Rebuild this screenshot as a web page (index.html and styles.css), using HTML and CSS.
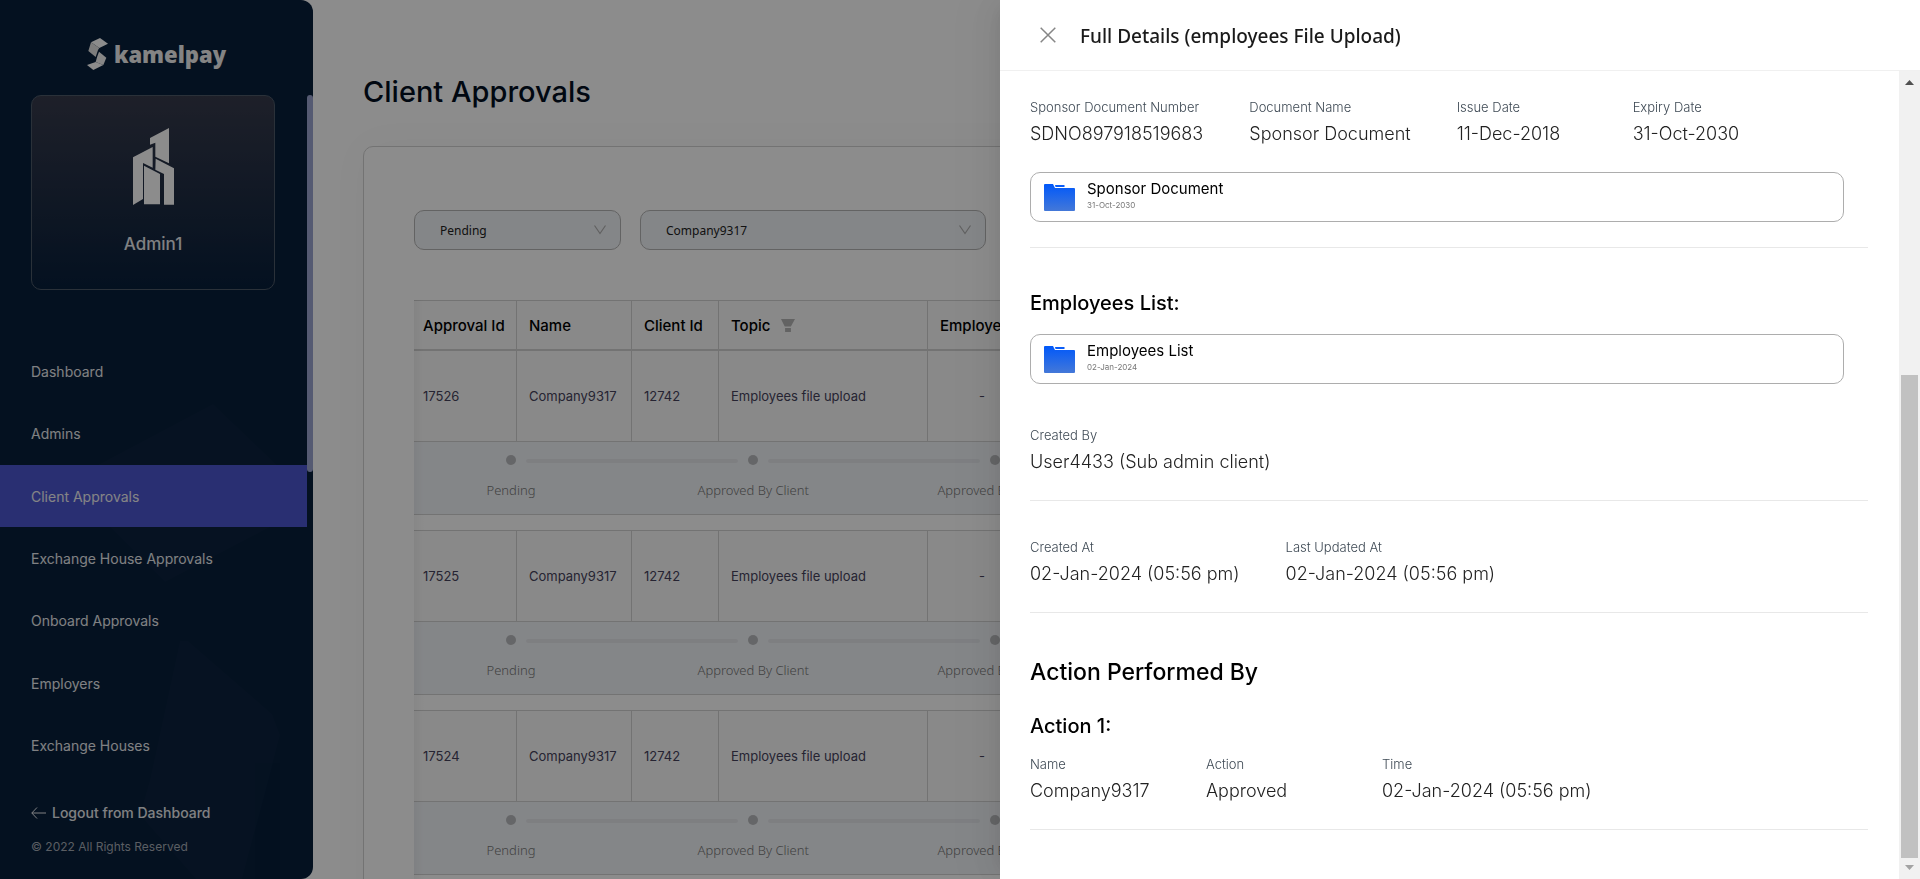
FILE: index.html
```html
<!DOCTYPE html>
<html lang="en">
<head>
<meta charset="utf-8">
<title>Client Approvals</title>
<link rel="stylesheet" href="styles.css">
</head>
<body>
<div class="app">
  <aside class="sidebar">
    <svg class="sidebar-art" viewBox="0 0 313 879" aria-hidden="true">
      <polygon points="98,465 213,404 280,468 270,527 165,582 110,527"/>
      <polygon points="180,641 188,641 272,714 280,735 242,879 196,879 140,815 150,780"/>
    </svg>
    <div class="brand">
      <svg class="brand-mark" viewBox="264 114 63 96" aria-hidden="true">
        <polygon fill="#fff" points="276,127 303,114 327,131 301,144"/>
        <polygon fill="#e4e4e4" points="276,127 301,144 297,150 290,171 268,153"/>
        <polygon fill="#f4f4f4" points="300,155 322,173 313,195 290,186 294,172"/>
        <polygon fill="#fff" points="290,186 313,195 283,210 264,195"/>
      </svg>
      <span class="brand-name">kamelpay</span>
    </div>
    <div class="sidebar-scroll">
      <div class="sidebar-content">
        <div class="profile">
          <svg class="profile-icon" viewBox="399 384 123 231" aria-hidden="true">
            <path d="M450 414 507 384V490L466 470V428L450 434ZM399 472 458 441V503L429 489V597L399 615ZM432 497 480 522V613H432ZM467 476 522 505V614H492V522L466 509Z"/>
          </svg>
          <span class="profile-name">Admin1</span>
        </div>
        <nav class="nav">
          <a href="#">Dashboard</a>
          <a href="#">Admins</a>
          <a href="#" class="active">Client Approvals</a>
          <a href="#">Exchange House Approvals</a>
          <a href="#">Onboard Approvals</a>
          <a href="#">Employers</a>
          <a href="#">Exchange Houses</a>
        </nav>
      </div>
      <div class="sidebar-track"><div class="sidebar-thumb"></div></div>
    </div>
    <div class="sidebar-footer">
      <a href="#" class="logout">
        <svg viewBox="0 0 15 12" aria-hidden="true"><path d="M6 .5.8 6 6 11.5M.8 6H15"/></svg>
        Logout from Dashboard
      </a>
      <p class="copyright">© 2022 All Rights Reserved</p>
    </div>
  </aside>

  <main class="main">
    <h1 class="page-title">Client Approvals</h1>
    <section class="panel">
      <div class="filters">
        <div class="select select-status">
          <select aria-label="Status"><option>Pending</option></select>
          <svg viewBox="0 0 12 10" aria-hidden="true"><path d="M.5.5 6 8.5 11.500.5"/></svg>
        </div>
        <div class="select select-company">
          <select aria-label="Company"><option>Company9317</option></select>
          <svg viewBox="0 0 12 10" aria-hidden="true"><path d="M.5.5 6 8.5 11.500.5"/></svg>
        </div>
      </div>
      <div class="table-wrap">
        <table class="approvals">
          <colgroup><col class="c-id"><col class="c-name"><col class="c-client"><col class="c-topic"><col class="c-emp"><col></colgroup>
          <thead>
            <tr>
              <th>Approval Id</th><th>Name</th><th>Client Id</th>
              <th>Topic <svg class="funnel" viewBox="306 415 41 38" aria-hidden="true"><path d="M306 415H347L335 437H317ZM318 441H335V453H318Z"/></svg></th>
              <th>Employees</th><th></th>
            </tr>
          </thead>
          <tbody>
            <tr class="row"><td>17526</td><td>Company9317</td><td>12742</td><td>Employees file upload</td><td class="center">-</td><td></td></tr>
            <tr class="progress"><td colspan="6">
              <ol class="steps"><li><i></i><span>Pending</span></li><li><i></i><span>Approved By Client</span></li><li><i></i><span>Approved By Admin</span></li><li><i></i></li><li><i></i></li><li><i></i></li></ol>
            </td></tr>
            <tr class="spacer"><td colspan="6"></td></tr>
            <tr class="row"><td>17525</td><td>Company9317</td><td>12742</td><td>Employees file upload</td><td class="center">-</td><td></td></tr>
            <tr class="progress"><td colspan="6">
              <ol class="steps"><li><i></i><span>Pending</span></li><li><i></i><span>Approved By Client</span></li><li><i></i><span>Approved By Admin</span></li><li><i></i></li><li><i></i></li><li><i></i></li></ol>
            </td></tr>
            <tr class="spacer"><td colspan="6"></td></tr>
            <tr class="row"><td>17524</td><td>Company9317</td><td>12742</td><td>Employees file upload</td><td class="center">-</td><td></td></tr>
            <tr class="progress"><td colspan="6">
              <ol class="steps"><li><i></i><span>Pending</span></li><li><i></i><span>Approved By Client</span></li><li><i></i><span>Approved By Admin</span></li><li><i></i></li><li><i></i></li><li><i></i></li></ol>
            </td></tr>
            <tr class="spacer"><td colspan="6"></td></tr>
          </tbody>
        </table>
      </div>
    </section>
  </main>
</div>

<div class="mask"></div>

<section class="drawer" role="dialog" aria-labelledby="drawer-title">
  <header class="drawer-header">
    <button class="close" type="button" aria-label="Close">
      <svg viewBox="0 0 16 16" aria-hidden="true"><path d="M.7.7 15.300 15.300M15.300.7.7 15.300"/></svg>
    </button>
    <h2 id="drawer-title" class="drawer-title">Full Details (employees File Upload)</h2>
  </header>
  <div class="drawer-main">
    <div class="drawer-body">
      <dl class="fields">
        <div><dt>Sponsor Document Number</dt><dd>SDNO897918519683</dd></div>
        <div><dt>Document Name</dt><dd>Sponsor Document</dd></div>
        <div><dt>Issue Date</dt><dd>11-Dec-2018</dd></div>
        <div><dt>Expiry Date</dt><dd>31-Oct-2030</dd></div>
      </dl>
      <a href="#" class="file file-after-fields">
        <svg class="folder" viewBox="0 0 31 27" aria-hidden="true">
          <defs><linearGradient id="folder-fill" x1="0" y1="0" x2="0" y2="1"><stop offset="0" stop-color="#0058fa"/><stop offset="1" stop-color="#4478d8"/></linearGradient></defs>
          <path fill="url(#folder-fill)" d="M1 0H9L11 4H30Q31 4 31 5V26Q31 27 30 27H1Q0 27 0 26V1Q0 0 1 0Z"/>
          <path fill="#0a5df8" d="M11 1H20.500V3H11.500Z"/>
        </svg>
        <span class="file-text"><span class="file-name">Sponsor Document</span><span class="file-date">31-Oct-2030</span></span>
      </a>
      <hr class="rule">
      <h3 class="heading heading-list">Employees List:</h3>
      <a href="#" class="file">
        <svg class="folder" viewBox="0 0 31 27" aria-hidden="true">
          <path fill="url(#folder-fill)" d="M1 0H9L11 4H30Q31 4 31 5V26Q31 27 30 27H1Q0 27 0 26V1Q0 0 1 0Z"/>
          <path fill="#0a5df8" d="M11 1H20.500V3H11.500Z"/>
        </svg>
        <span class="file-text"><span class="file-name">Employees List</span><span class="file-date">02-Jan-2024</span></span>
      </a>
      <dl class="fields fields-creator">
        <div><dt>Created By</dt><dd>User4433 (Sub admin client)</dd></div>
      </dl>
      <hr class="rule">
      <dl class="fields fields-dates">
        <div><dt>Created At</dt><dd>02-Jan-2024 (05:56 pm)</dd></div>
        <div><dt>Last Updated At</dt><dd>02-Jan-2024 (05:56 pm)</dd></div>
      </dl>
      <hr class="rule">
      <h2 class="heading-large">Action Performed By</h2>
      <h3 class="heading heading-action">Action 1:</h3>
      <dl class="fields">
        <div><dt>Name</dt><dd>Company9317</dd></div>
        <div><dt>Action</dt><dd>Approved</dd></div>
        <div><dt>Time</dt><dd>02-Jan-2024 (05:56 pm)</dd></div>
      </dl>
      <hr class="rule">
    </div>
    <div class="scrollbar" aria-hidden="true">
      <svg class="arrow arrow-up" viewBox="0 0 9 5"><path d="M0 5 4.500 0 9 5Z"/></svg>
      <div class="thumb-area"><div class="thumb"></div></div>
      <svg class="arrow arrow-down" viewBox="0 0 9 5"><path d="M0 0 4.500 5 9 0Z"/></svg>
    </div>
  </div>
</section>
</body>
</html>
```
FILE: styles.css
```css
* { box-sizing: border-box; }

body {
  margin: 0;
  height: 100vh;
  overflow: hidden;
  background: #fff;
  font-family: Inter, "Noto Sans", sans-serif;
  color: #000;
}

h1, h2, h3, p, dl, dd, ol { margin: 0; padding: 0; }
a { color: inherit; text-decoration: none; }

.app { display: flex; height: 100vh; }

/* Sidebar */
.sidebar {
  position: relative;
  flex: none;
  width: 313px;
  display: flex;
  flex-direction: column;
  background: #081f3b;
  border-radius: 0 12px 12px 0;
  color: #e9ebee;
  overflow: hidden;
}
.sidebar-art { position: absolute; inset: 0; width: 100%; height: 100%; fill: #fff; opacity: .01; }
.brand { display: flex; align-items: center; justify-content: center; gap: 6px; height: 95px; padding-top: 13px; }
.brand-mark { width: 21px; height: 32px; }
.brand-name { font: 800 22px/28px "Open Sans", sans-serif; color: #f0f0f0; }
.sidebar-scroll { flex: 1; display: flex; min-height: 0; }
.sidebar-content { position: relative; flex: 1; display: flex; flex-direction: column; }
.profile {
  margin: 0 32px 50px 31px;
  height: 195px;
  display: flex;
  flex-direction: column;
  align-items: center;
  gap: 26px;
  padding-top: 32px;
  border: 1px solid #4d5a68;
  border-radius: 10px;
  background: linear-gradient(#373b4c, #081f3b);
}
.profile-icon { width: 41px; height: 77px; fill: #fff; }
.profile-name { font-size: 17px; line-height: 26px; font-weight: 500; }
.nav { flex: 1; display: grid; grid-auto-rows: 1fr; }
.nav a { display: flex; align-items: center; padding-left: 31px; font-size: 14px; }
.nav .active { background: #4c56cf; color: #f0f0f4; }
.sidebar-track { width: 6px; }
.sidebar-thumb { height: 377px; border-radius: 3px; background: #9ca5d0; }
.sidebar-footer { position: relative; height: 102px; padding: 24px 31px 0; }
.logout { display: flex; align-items: center; gap: 6px; font-size: 14px; line-height: 24px; font-weight: 500; }
.logout svg { width: 15px; height: 12px; fill: none; stroke: #e9ebee; }
.copyright { margin-top: 12px; font-size: 12px; line-height: 20px; color: #a5abb5; }

/* Main page */
.main { flex: 1; min-width: 0; padding: 72px 50px 0; overflow: hidden; }
.page-title { font-size: 29px; line-height: 40px; font-weight: 500; color: #030f1f; }
.panel {
  margin-top: 34px;
  height: 900px;
  padding: 63px 50px 0;
  border: 1px solid #d1d1d1;
  border-radius: 10px;
  box-shadow: 0 0 40px rgba(0, 0, 0, .03);
}
.filters { display: flex; gap: 19px; }
.select { position: relative; height: 40px; }
.select-status { width: 207px; }
.select-company { width: 346px; }
.select select {
  width: 100%;
  height: 100%;
  padding: 0 25px;
  appearance: none;
  border: 1px solid #b4b4b4;
  border-radius: 10px;
  background: #f1f4f8;
  font: 12px "Noto Sans", sans-serif;
  color: #222;
}
.select svg { position: absolute; right: 15px; top: 15px; width: 12px; height: 10px; fill: none; stroke: #b0b0b0; stroke-width: 1.200; }

.table-wrap { position: relative; margin-top: 50px; }
.table-wrap::after {
  content: "";
  position: absolute;
  inset: 0 auto 0 0;
  width: 10px;
  background: linear-gradient(90deg, rgba(0, 0, 0, .04), transparent);
}
.approvals { width: 100%; table-layout: fixed; border-collapse: separate; border-spacing: 0; }
.c-id { width: 103px; }
.c-name { width: 115px; }
.c-client { width: 87px; }
.c-topic { width: 209px; }
.c-emp { width: 109px; }
.approvals th {
  height: 51px;
  padding: 0 0 0 12px;
  border: solid #d1d1d1;
  border-width: 1px 1px 2px 0;
  background: #fafafa;
  font-size: 15px;
  font-weight: 500;
  text-align: left;
  white-space: nowrap;
}
.approvals th:first-child, .row td:first-child { padding-left: 9px; }
.funnel { width: 14px; height: 13px; margin-left: 7px; vertical-align: -1px; fill: #b4b4b4; }
.row td {
  height: 91px;
  padding: 0 0 0 12px;
  border: solid #d1d1d1;
  border-width: 0 1px 1px 0;
  background: #fafafa;
  font-size: 13px;
  color: #45425c;
}
.row .center { padding: 0; text-align: center; }
.progress td { height: 73px; padding: 13px 0 0; vertical-align: top; border-bottom: 1px solid #d1d1d1; background: #f1f4f8; }
.spacer td { height: 16px; padding: 0; border-bottom: 1px solid #d1d1d1; }
.steps { display: flex; list-style: none; }
.steps li { flex: 1; position: relative; padding-left: 92px; }
.steps li:last-child { flex: none; width: 194px; }
.steps li:not(:last-child)::after {
  content: "";
  position: absolute;
  top: 4px;
  left: 112px;
  width: calc(100% - 30px);
  height: 4px;
  border-radius: 2px;
  background: #e6e8ec;
}
.steps i { display: block; width: 10px; height: 10px; border-radius: 50%; background: #b9babd; }
.steps span { display: block; width: 194px; margin: 15px 0 0 -92px; text-align: center; font: 300 13px/20px "Noto Sans", sans-serif; color: #777; }

/* Drawer */
.mask { position: fixed; inset: 0; background: rgba(0, 0, 0, .45); }
.drawer {
  position: fixed;
  inset: 0 0 0 auto;
  width: 920px;
  max-width: 100%;
  display: flex;
  flex-direction: column;
  background: #fff;
  box-shadow: -6px 0 16px -8px rgba(0, 0, 0, .08), -9px 0 28px rgba(0, 0, 0, .05), -12px 0 48px 16px rgba(0, 0, 0, .03);
}
.drawer-header { display: flex; align-items: center; gap: 24px; height: 71px; padding: 0 40px; border-bottom: 1px solid #f0f0f0; }
.close { width: 16px; height: 16px; padding: 0; border: 0; background: none; }
.close svg { display: block; width: 16px; height: 16px; fill: none; stroke: #868686; stroke-width: 1.500; }
.drawer-title { padding-top: 2px; font: 500 19px/28px "Noto Sans", sans-serif; color: #1a1a1a; }
.drawer-main { flex: 1; display: flex; min-height: 0; }
.drawer-body { flex: 1; padding: 25px 31px 0 30px; overflow: hidden; }

.fields { display: flex; gap: 46px; margin-bottom: 23px; }
.fields > div { min-width: 130px; }
.fields dt { font-size: 13px; line-height: 22px; font-weight: 300; color: #3f4a55; }
.fields dd { margin-top: 1px; font-size: 18px; line-height: 30px; font-weight: 300; color: #222; }
.fields-creator { margin-top: 40px; }
.fields-dates { margin-top: 35px; }

.file {
  display: flex;
  align-items: center;
  gap: 12px;
  height: 50px;
  margin-right: 24px;
  padding: 0 13px;
  border: 1px solid #adadad;
  border-radius: 10px;
}
.file-after-fields { margin-bottom: 25px; }
.folder { width: 31px; height: 27px; }
.file-text { display: flex; flex-direction: column; padding-bottom: 4px; }
.file-name { font-size: 15px; line-height: 20px; }
.file-date { font-size: 8px; line-height: 12px; color: #777; }
.rule { height: 1px; margin: 0; border: 0; background: #e8e8e8; }
.heading { font-size: 20px; line-height: 30px; font-weight: 500; }
.heading-list { margin: 40px 0 16px; }
.heading-large { margin-top: 41px; font-size: 23px; line-height: 36px; font-weight: 500; }
.heading-action { margin: 21px 0 12px; }

.scrollbar { width: 21px; display: flex; flex-direction: column; align-items: center; padding: 9px 0; background: #f1f1f1; }
.arrow { width: 9px; height: 5px; }
.arrow-up { fill: #505050; }
.arrow-down { fill: #a3a3a3; }
.thumb-area { flex: 1; width: 17px; display: flex; flex-direction: column; justify-content: flex-end; padding: 6px 0 7px; }
.thumb { height: 63%; background: #c1c1c1; }
```
